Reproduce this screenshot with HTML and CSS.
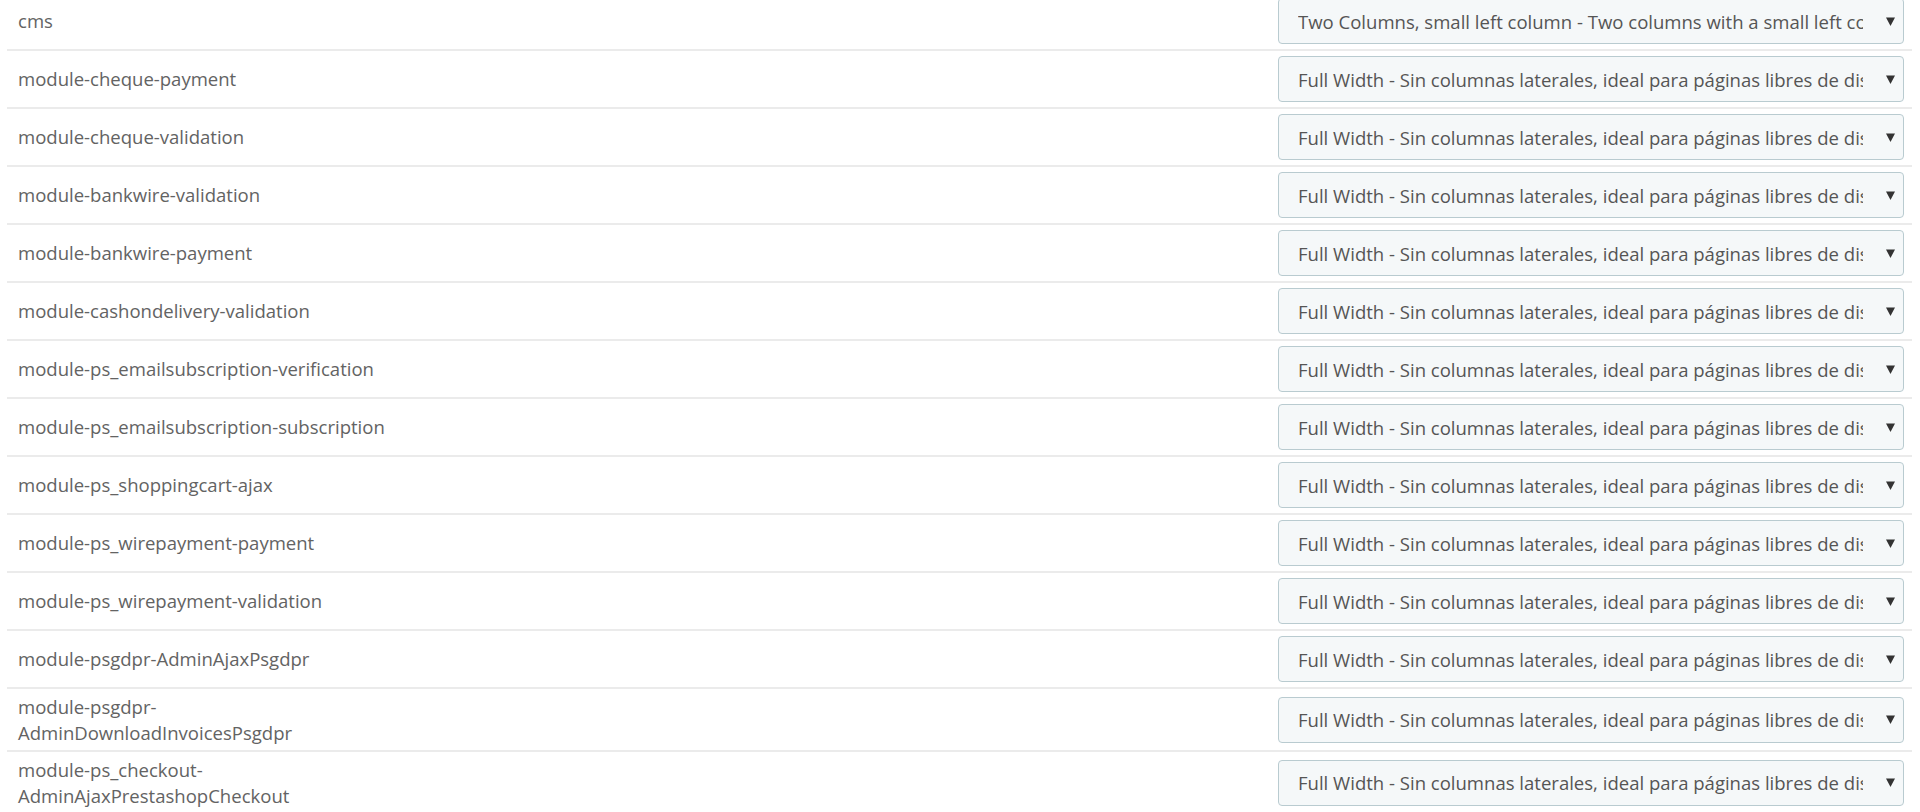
FILE: index.html
```html
<!DOCTYPE html>
<html lang="es">
<head>
<meta charset="utf-8">
<title>Layouts</title>
<link rel="stylesheet" href="styles.css">
</head>
<body>
<div class="table">
  <div class="row">
    <div class="label">cms</div>
    <div class="cell"><div class="select"><span class="value">Two Columns, small left column - Two columns with a small left column</span><svg class="arrow" viewBox="0 0 9 9" width="9" height="9"><polygon points="0,0.5 9,0.5 4.5,9"/></svg></div></div>
  </div>
  <div class="row">
    <div class="label">module-cheque-payment</div>
    <div class="cell"><div class="select"><span class="value">Full Width - Sin columnas laterales, ideal para páginas libres de diseño</span><svg class="arrow" viewBox="0 0 9 9" width="9" height="9"><polygon points="0,0.5 9,0.5 4.5,9"/></svg></div></div>
  </div>
  <div class="row">
    <div class="label">module-cheque-validation</div>
    <div class="cell"><div class="select"><span class="value">Full Width - Sin columnas laterales, ideal para páginas libres de diseño</span><svg class="arrow" viewBox="0 0 9 9" width="9" height="9"><polygon points="0,0.5 9,0.5 4.5,9"/></svg></div></div>
  </div>
  <div class="row">
    <div class="label">module-bankwire-validation</div>
    <div class="cell"><div class="select"><span class="value">Full Width - Sin columnas laterales, ideal para páginas libres de diseño</span><svg class="arrow" viewBox="0 0 9 9" width="9" height="9"><polygon points="0,0.5 9,0.5 4.5,9"/></svg></div></div>
  </div>
  <div class="row">
    <div class="label">module-bankwire-payment</div>
    <div class="cell"><div class="select"><span class="value">Full Width - Sin columnas laterales, ideal para páginas libres de diseño</span><svg class="arrow" viewBox="0 0 9 9" width="9" height="9"><polygon points="0,0.5 9,0.5 4.5,9"/></svg></div></div>
  </div>
  <div class="row">
    <div class="label">module-cashondelivery-validation</div>
    <div class="cell"><div class="select"><span class="value">Full Width - Sin columnas laterales, ideal para páginas libres de diseño</span><svg class="arrow" viewBox="0 0 9 9" width="9" height="9"><polygon points="0,0.5 9,0.5 4.5,9"/></svg></div></div>
  </div>
  <div class="row">
    <div class="label">module-ps_emailsubscription-verification</div>
    <div class="cell"><div class="select"><span class="value">Full Width - Sin columnas laterales, ideal para páginas libres de diseño</span><svg class="arrow" viewBox="0 0 9 9" width="9" height="9"><polygon points="0,0.5 9,0.5 4.5,9"/></svg></div></div>
  </div>
  <div class="row">
    <div class="label">module-ps_emailsubscription-subscription</div>
    <div class="cell"><div class="select"><span class="value">Full Width - Sin columnas laterales, ideal para páginas libres de diseño</span><svg class="arrow" viewBox="0 0 9 9" width="9" height="9"><polygon points="0,0.5 9,0.5 4.5,9"/></svg></div></div>
  </div>
  <div class="row">
    <div class="label">module-ps_shoppingcart-ajax</div>
    <div class="cell"><div class="select"><span class="value">Full Width - Sin columnas laterales, ideal para páginas libres de diseño</span><svg class="arrow" viewBox="0 0 9 9" width="9" height="9"><polygon points="0,0.5 9,0.5 4.5,9"/></svg></div></div>
  </div>
  <div class="row">
    <div class="label">module-ps_wirepayment-payment</div>
    <div class="cell"><div class="select"><span class="value">Full Width - Sin columnas laterales, ideal para páginas libres de diseño</span><svg class="arrow" viewBox="0 0 9 9" width="9" height="9"><polygon points="0,0.5 9,0.5 4.5,9"/></svg></div></div>
  </div>
  <div class="row">
    <div class="label">module-ps_wirepayment-validation</div>
    <div class="cell"><div class="select"><span class="value">Full Width - Sin columnas laterales, ideal para páginas libres de diseño</span><svg class="arrow" viewBox="0 0 9 9" width="9" height="9"><polygon points="0,0.5 9,0.5 4.5,9"/></svg></div></div>
  </div>
  <div class="row">
    <div class="label">module-psgdpr-AdminAjaxPsgdpr</div>
    <div class="cell"><div class="select"><span class="value">Full Width - Sin columnas laterales, ideal para páginas libres de diseño</span><svg class="arrow" viewBox="0 0 9 9" width="9" height="9"><polygon points="0,0.5 9,0.5 4.5,9"/></svg></div></div>
  </div>
  <div class="row">
    <div class="label">module-psgdpr-AdminDownloadInvoicesPsgdpr</div>
    <div class="cell"><div class="select"><span class="value">Full Width - Sin columnas laterales, ideal para páginas libres de diseño</span><svg class="arrow" viewBox="0 0 9 9" width="9" height="9"><polygon points="0,0.5 9,0.5 4.5,9"/></svg></div></div>
  </div>
  <div class="row">
    <div class="label">module-ps_checkout-AdminAjaxPrestashopCheckout</div>
    <div class="cell"><div class="select"><span class="value">Full Width - Sin columnas laterales, ideal para páginas libres de diseño</span><svg class="arrow" viewBox="0 0 9 9" width="9" height="9"><polygon points="0,0.5 9,0.5 4.5,9"/></svg></div></div>
  </div>
</div>
</body>
</html>
```
FILE: styles.css
```css
html, body {
  margin: 0;
  padding: 0;
  background: #ffffff;
  overflow: hidden;
}
body {
  font-family: "Open Sans", "Noto Sans", sans-serif;
  font-size: 18.55px;
  color: #555555;
}
.table {
  margin: -7px 8px 0 7px;
}
.row {
  display: flex;
  align-items: center;
  justify-content: space-between;
  border-bottom: 2px solid #ebebeb;
  min-height: 56px;
}
.label {
  width: 400px;
  padding: 5px 0 5px 11px;
  line-height: 25.5px;
  color: #636363;
}
.cell {
  padding: 5px 8px 5px 0;
}
.select {
  width: 626px;
  height: 46px;
  box-sizing: border-box;
  border: 1px solid #b9cbd0;
  border-radius: 4px;
  background: #f5f8f9;
  display: flex;
  align-items: center;
  padding: 0 8px 0 19px;
}
.value {
  flex: none;
  width: 565px;
  overflow: hidden;
  white-space: nowrap;
  color: #555555;
}
.arrow {
  margin-left: auto;
  fill: #333333;
  flex: none;
}
```
